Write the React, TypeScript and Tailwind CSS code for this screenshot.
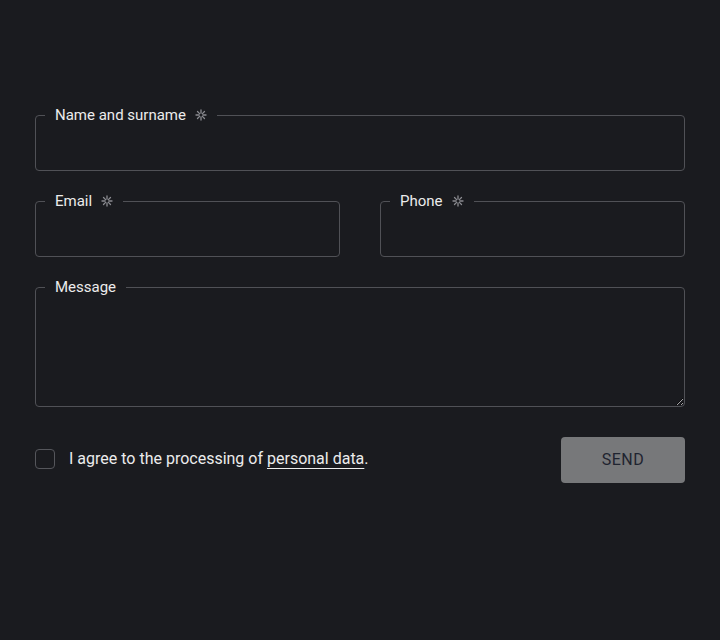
import React from 'react';

const Star = () => (
  <svg width="12" height="12" viewBox="0 0 12 12" className="ml-[9px] inline-block" aria-hidden>
    <g stroke="#8a8b90" strokeWidth="1.3" strokeLinecap="round">
      <line x1="6" y1="1" x2="6" y2="4.2" />
      <line x1="6" y1="7.8" x2="6" y2="11" />
      <line x1="1" y1="6" x2="4.2" y2="6" />
      <line x1="7.8" y1="6" x2="11" y2="6" />
      <line x1="2.5" y1="2.5" x2="4.6" y2="4.6" />
      <line x1="7.4" y1="7.4" x2="9.5" y2="9.5" />
      <line x1="9.5" y1="2.5" x2="7.4" y2="4.6" />
      <line x1="4.6" y1="7.4" x2="2.5" y2="9.5" />
    </g>
  </svg>
);

interface FieldProps {
  label: string;
  required?: boolean;
  multiline?: boolean;
  className?: string;
}

const Field: React.FC<FieldProps> = ({ label, required, multiline, className = '' }) => (
  <fieldset className={`m-0 min-w-0 rounded-[4px] border border-[#505156] p-0 pl-[9px] ${className}`}>
    <legend className="flex items-center px-[10px] text-[15px] leading-[20px] text-[#ececec]">
      {label}
      {required && <Star />}
    </legend>
    {multiline ? (
      <textarea className="-ml-[9px] block h-[109px] w-[calc(100%+9px)] resize-y bg-transparent outline-none" />
    ) : (
      <input className="-ml-[9px] block h-[45px] w-[calc(100%+9px)] bg-transparent outline-none" />
    )}
  </fieldset>
);

export default function App() {
  return (
    <div className="min-h-[640px] w-full bg-[#1a1b1f] pt-[105px] font-['Roboto',sans-serif]">
      <form className="mx-auto flex w-[650px] flex-col gap-[20px]" onSubmit={e => e.preventDefault()}>
        <Field label="Name and surname" required />
        <div className="grid grid-cols-2 gap-[40px]">
          <Field label="Email" required />
          <Field label="Phone" required />
        </div>
        <Field label="Message" multiline />
        <div className="mt-[10px] flex items-center justify-between">
          <label className="-mt-[2px] flex items-center text-[16px] text-[#ececec]">
            <span className="mr-[14px] block h-[20px] w-[20px] rounded-[4px] border border-[#55565b]" />
            <span>
              I agree to the processing of{' '}
              <span className="underline decoration-[#ececec] underline-offset-[4px]">personal data</span>.
            </span>
          </label>
          <button
            type="submit"
            className="h-[46px] w-[124px] rounded-[4px] bg-[#77787a] text-[16px] tracking-[0.5px] text-[#1f2430]"
          >
            SEND
          </button>
        </div>
      </form>
    </div>
  );
}
